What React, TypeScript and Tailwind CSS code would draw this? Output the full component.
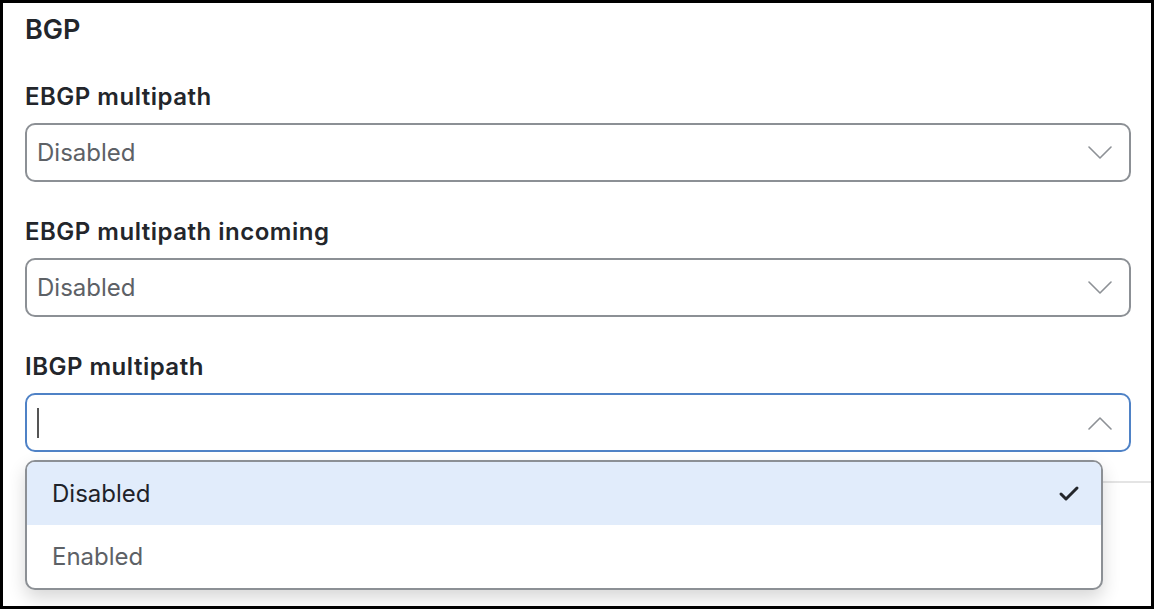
import { Check } from "lucide-react"

function Chevron({ up }: { up?: boolean }) {
    return (
        <svg width="24" height="14" viewBox="0 0 24 14" fill="none" className="shrink-0">
            <polyline
                points={up ? "1,13 12,2 23,13" : "1,1 12,12 23,1"}
                stroke="#8d9196"
                strokeWidth="1.6"
                strokeLinecap="round"
                strokeLinejoin="round"
            />
        </svg>
    )
}

interface FieldProps {
    label: string
    value?: string
    open?: boolean
}

function SelectField({ label, value, open }: FieldProps) {
    return (
        <div className="relative">
            <div className="text-[24px] leading-[28px] font-semibold tracking-[0.5px] text-[#23262b]">{label}</div>
            <div
                className={
                    open
                        ? "mt-[12px] h-[59px] rounded-[10px] border-2 border-[#4f82c6] flex items-center pl-[10px] pr-[17px]"
                        : "mt-[12px] h-[59px] rounded-[10px] border-2 border-[#8c9095] flex items-center pl-[10px] pr-[17px]"
                }
            >
                <div className="flex-1 flex items-center">
                    {open ? (
                        <span className="w-[2px] h-[30px] bg-[#555]" />
                    ) : (
                        <span className="text-[24px] text-[#5d6166]">{value}</span>
                    )}
                </div>
                <Chevron up={open} />
            </div>
            {open && (
                <div className="absolute left-0 top-[calc(100%+8px)] w-[1078px] z-10 bg-white border-2 border-[#8c9095] rounded-[10px] overflow-hidden shadow-[0_8px_18px_rgba(0,0,0,0.16)]">
                    <div className="h-[63px] bg-[#e1ecfb] flex items-center justify-between pl-[25px] pr-[20px]">
                        <span className="text-[24px] text-[#1e2229]">Disabled</span>
                        <Check size={24} strokeWidth={3} color="#23262b" />
                    </div>
                    <div className="h-[63px] flex items-center pl-[25px]">
                        <span className="text-[24px] text-[#5d6166]">Enabled</span>
                    </div>
                </div>
            )}
        </div>
    )
}

function App() {
    return (
        <div className="w-[1154px] h-[609px] border-[3px] border-black bg-white overflow-hidden font-['Inter',sans-serif]">
            <div className="pl-[22px] pr-[20px] pt-[11px]">
                <h2 className="text-[27px] leading-[32px] font-semibold text-[#23262b]">BGP</h2>
                <div className="mt-[37px] flex flex-col gap-[36px]">
                    <SelectField label="EBGP multipath" value="Disabled" />
                    <SelectField label="EBGP multipath incoming" value="Disabled" />
                    <SelectField label="IBGP multipath" open />
                </div>
            </div>
            <div className="ml-[22px] mt-[29px] h-[200px] border-t-2 border-[#e4e4e4] bg-white" />
        </div>
    )
}

export default App
